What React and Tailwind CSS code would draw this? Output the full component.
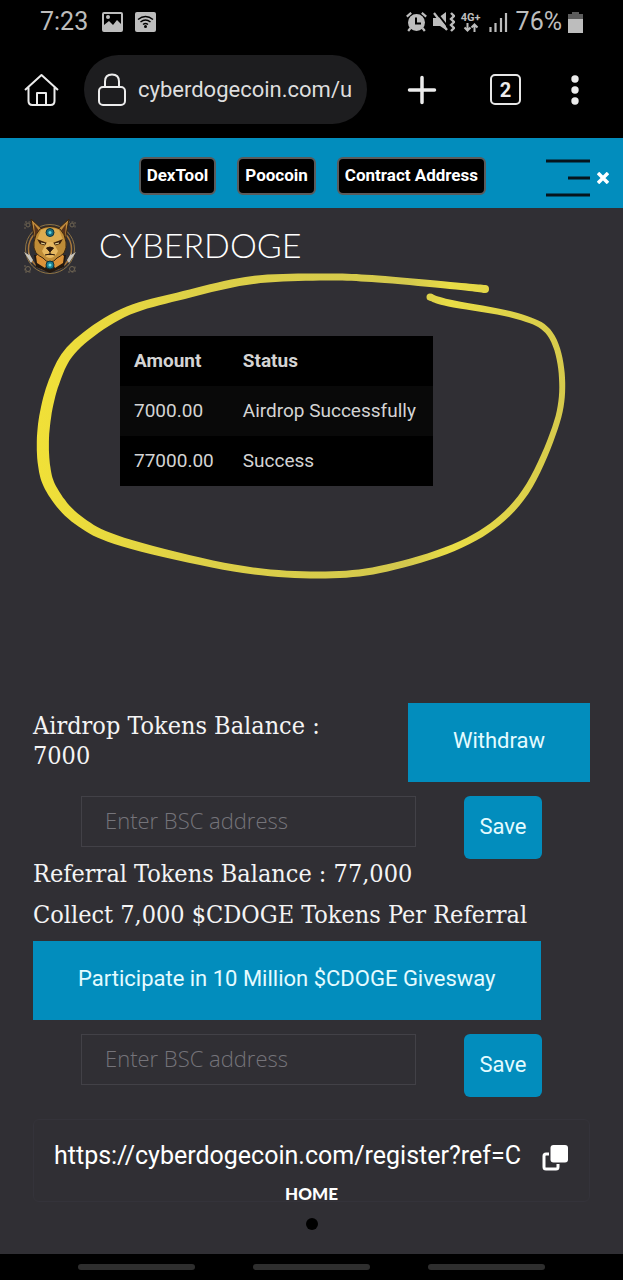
const HEADER_LINKS = ['DexTool', 'Poocoin', 'Contract Address'];

const PAYOUTS = [
  { amount: '7000.00', status: 'Airdrop Successfully' },
  { amount: '77000.00', status: 'Success' },
];

// x, y, pen width
const PEN_POINTS = [
  [485, 289, 8],
  [456, 286, 7],
  [378, 279, 7],
  [326, 277, 7],
  [253, 280, 8],
  [184, 295, 8],
  [123, 313, 9],
  [74, 347, 10],
  [54, 382, 11],
  [44, 425, 12],
  [44, 465, 12],
  [53, 492, 11],
  [78, 520, 10],
  [123, 542, 9],
  [234, 568, 7],
  [318, 575, 7],
  [387, 568, 7],
  [468, 541, 7],
  [521, 498, 7],
  [555, 428, 6],
  [562, 378, 6],
  [550, 334, 6],
  [517, 316, 6],
  [449, 303, 7],
  [430, 297, 7],
];

function spline(a, b, c, d, t) {
  return (
    0.5 *
    (2 * b + (c - a) * t + (2 * a - 5 * b + 4 * c - d) * t * t + (3 * b - a - 3 * c + d) * t * t * t)
  );
}

function penOutline(points) {
  const line = [];
  for (let i = 0; i < points.length - 1; i++) {
    const p0 = points[Math.max(i - 1, 0)];
    const p3 = points[Math.min(i + 2, points.length - 1)];
    for (let s = 0; s < 10; s++) {
      line.push([0, 1, 2].map((k) => spline(p0[k], points[i][k], points[i + 1][k], p3[k], s / 10)));
    }
  }
  line.push(points[points.length - 1]);

  const left = [];
  const right = [];
  line.forEach(([x, y, w], i) => {
    const prev = line[Math.max(i - 1, 0)];
    const next = line[Math.min(i + 1, line.length - 1)];
    const dx = next[0] - prev[0];
    const dy = next[1] - prev[1];
    const len = Math.hypot(dx, dy) || 1;
    const nx = (-dy / len) * (w / 2);
    const ny = (dx / len) * (w / 2);
    left.push(`${(x + nx).toFixed(1)},${(y + ny).toFixed(1)}`);
    right.push(`${(x - nx).toFixed(1)},${(y - ny).toFixed(1)}`);
  });
  return `M${left.join('L')}L${right.reverse().join('L')}Z`;
}

function PenCircle() {
  return (
    <svg
      className="absolute left-0 top-0 pointer-events-none"
      width="623"
      height="400"
      viewBox="0 208 623 400"
      aria-hidden="true"
    >
      <defs>
        <linearGradient id="pen" x1="40" y1="0" x2="565" y2="0" gradientUnits="userSpaceOnUse">
          <stop offset="0" stopColor="#f0e038" />
          <stop offset="0.3" stopColor="#ddd047" />
          <stop offset="0.7" stopColor="#d3c84d" />
          <stop offset="0.78" stopColor="#e9dd46" />
          <stop offset="1" stopColor="#d6ca4c" />
        </linearGradient>
      </defs>
      <g fill="url(#pen)">
        <path d={penOutline(PEN_POINTS)} />
        <circle cx="485" cy="289" r="4" />
        <circle cx="430" cy="297" r="3.500" />
      </g>
    </svg>
  );
}

function StatusBar() {
  return (
    <div className="h-11 flex items-center pl-10 pr-10 text-[#bdbdbd] text-[25px] leading-8">
      <span>7:23</span>
      <svg className="ml-3.5" width="21" height="20" viewBox="0 0 21 20">
        <path fill="currentColor" fillRule="evenodd" d="M2 0h17q2 0 2 2v16q0 2-2 2H2q-2 0-2-2V2q0-2 2-2ZM2 2v11l5-4 4 4 4-5 4 4V2Z" />
        <circle cx="6" cy="5" r="2" fill="currentColor" />
      </svg>
      <svg className="ml-3" width="21" height="20" viewBox="0 0 21 20">
        <rect width="21" height="20" rx="2" fill="currentColor" />
        <g fill="none" stroke="#000" strokeWidth="1.500">
          <path d="M3 7.500q7.500-6 15 0M5.500 10q5-4 10 0M8 12.500q2.500-2 5 0" />
        </g>
        <circle cx="10.500" cy="14.500" r="1.500" fill="#000" />
      </svg>
      <svg className="ml-auto" width="21" height="20" viewBox="0 0 21 20">
        <circle cx="10.500" cy="10.500" r="8.500" fill="currentColor" />
        <path d="M.8 4.600 5.200.8M20.200 4.600 15.800.8M4.500 16 2.200 19M16.500 16l2.300 3" stroke="currentColor" strokeWidth="2.200" />
        <path d="M10 5.500v6h5" fill="none" stroke="#000" strokeWidth="2" />
      </svg>
      <svg className="ml-1.5" width="22" height="20" viewBox="0 0 22 20">
        <path d="M0 6h5L13 0v18l-6-4H0Z" fill="currentColor" />
        <path d="m3 0 12 15" stroke="#000" strokeWidth="2" />
        <path d="m1 1 13 17" stroke="currentColor" strokeWidth="2.200" />
        <path d="m18 1 3 3-3 3 3 3-3 3 3 3-3 3" fill="none" stroke="currentColor" strokeWidth="2.400" />
      </svg>
      <div className="ml-1.5 flex flex-col items-center">
        <span className="text-[11px] leading-[11px] font-bold">4G+</span>
        <svg width="16" height="9" viewBox="0 0 16 9">
          <path d="M4.500 0v8M1.500 4.500l3 3 3-3M11.500 9V1M8.500 4.500l3-3 3 3" fill="none" stroke="currentColor" strokeWidth="2" />
        </svg>
      </div>
      <svg className="ml-2" width="19" height="20" viewBox="0 0 19 20">
        <path d="M1.500 15v5M6.500 11v9M12 6v14M17 1v19" stroke="currentColor" strokeWidth="2.200" />
      </svg>
      <span className="ml-2">76%</span>
      <svg className="ml-1.5" width="15" height="21" viewBox="0 0 15 21">
        <path d="M0 2h4V0h7v2h4v6H0Z" fill="#5c5c5c" />
        <path d="M0 7h15v14H0Z" fill="currentColor" />
      </svg>
    </div>
  );
}

function BrowserBar() {
  return (
    <div className="flex items-center pl-6 pr-10 pt-[11px] pb-3.5 text-[#ececec]">
      <button type="button" aria-label="Home page">
        <svg width="36" height="34" viewBox="0 0 36 34" fill="none" stroke="currentColor" strokeWidth="2" strokeLinejoin="round">
          <path d="M1 17 17.500 2 34 17M4.500 14v14q0 4 4 4h18q4 0 4-4V14M13 32V20h9v12" />
        </svg>
      </button>
      <div className="ml-6 flex-1 min-w-0 h-[69px] rounded-full bg-[#1d1d1f] flex items-center pl-3.5 pr-3">
        <svg className="shrink-0" width="28" height="34" viewBox="0 0 28 34" fill="none" stroke="currentColor" strokeWidth="2">
          <rect x="1" y="14" width="26" height="18" rx="4" />
          <path d="M7 14V8.500q0-7 7-7t7 7V14" />
        </svg>
        <input
          type="text"
          aria-label="Address"
          readOnly
          defaultValue="cyberdogecoin.com/u"
          className="ml-3 flex-1 min-w-0 text-[22px] leading-8 text-[#dedede] outline-none"
        />
      </div>
      <button type="button" aria-label="New tab" className="ml-10">
        <svg width="30" height="30" viewBox="0 0 30 30" stroke="currentColor" strokeWidth="3.500" strokeLinecap="round">
          <path d="M15 2.500v25M2.500 15h25" />
        </svg>
      </button>
      <button
        type="button"
        aria-label="Tabs"
        className="ml-[53px] size-[31px] rounded-[5px] border-2 border-[#e6e6e6] text-xl leading-6 font-bold"
      >
        2
      </button>
      <button type="button" aria-label="More" className="ml-[46px]">
        <svg width="16" height="30" viewBox="0 0 16 30" fill="currentColor">
          <circle cx="8" cy="4" r="3.700" />
          <circle cx="8" cy="15" r="3.700" />
          <circle cx="8" cy="26" r="3.700" />
        </svg>
      </button>
    </div>
  );
}

function SiteHeader() {
  return (
    <header className="h-[70px] bg-[#028dbd] flex items-center justify-end pt-2.5 pr-3.5 text-white">
      <nav className="flex gap-[21px] -mt-1">
        {HEADER_LINKS.map((label) => (
          <a
            key={label}
            href="#"
            className="h-[38px] px-1.5 pb-0.5 flex items-center rounded-[6px] border-2 border-[#5b5b5b] bg-black text-[17px] leading-5 font-bold whitespace-nowrap"
          >
            {label}
          </a>
        ))}
      </nav>
      <button type="button" aria-label="Menu" className="ml-[59px] flex items-center gap-1.5">
        <svg width="46" height="38" viewBox="0 0 46 38" stroke="#06141c" strokeWidth="3">
          <path d="M1 2h44M23 19h22M1 36h44" />
        </svg>
        <svg width="12" height="12" viewBox="0 0 12 12" stroke="#fff" strokeWidth="3.500">
          <path d="m1 1 10 10M11 1 1 11" />
        </svg>
      </button>
    </header>
  );
}

function DogeLogo() {
  return (
    <svg width="54" height="56" viewBox="0 0 54 56">
      <g fill="none" stroke="#6f6552">
        <circle cx="27" cy="30" r="24.500" stroke="#8f7444" />
        <circle cx="27" cy="30" r="21.500" strokeWidth="1.500" stroke="#a8773a" />
        <path d="M2 10V3h7M45 3h7v7M2 46v7h7M45 53h7v-7" strokeDasharray="2 1.500" />
        <circle cx="5" cy="6" r="2" />
        <circle cx="49" cy="6" r="2" />
        <circle cx="5" cy="50" r="2.500" />
        <circle cx="49" cy="50" r="2.500" />
      </g>
      <path d="m1 33 5 3-1-3 5 8-2 3ZM53 33l-5 3 1-3-5 8 2 3Z" fill="#c9c6be" />
      <path d="M11 36h32l-2 12-14 6-14-6Z" fill="#23180f" />
      <path d="m13 37 4-3 8 9-3 6-8-5ZM41 37l-4-3-8 9 3 6 8-5Z" fill="#db9238" />
      <path d="m8 0 12 11-8 11ZM46 0 34 11l8 11Z" fill="#c08a3c" stroke="#3b2610" />
      <path d="m11 5 6 8-5 5ZM43 5l-6 8 5 5Z" fill="#57331a" />
      <path d="M17 10q10-5 20 0 5 5 6 13 1 6-2 11-3 3-7 5-3 4-7 4t-7-4q-4-2-7-5-3-5-2-11 1-8 6-13Z" fill="#bf8c37" stroke="#3b2610" />
      <path d="M18 11q9-4 18 0l4 10-9 2h-8l-9-2Z" fill="#dcac50" />
      <path d="m14 20 10 4v3l-7-2ZM40 20l-10 4v3l7-2Z" fill="#3e220d" />
      <path d="m18 24 4 1M36 24l-4 1" stroke="#f7e7a0" />
      <path d="M24 23h6l5 9q-3 7-8 7t-8-7Z" fill="#e6b860" />
      <path d="M23.500 29q3.500-2 7 0L27 33ZM27 33v2.500M22 36q5-2 10 0" fill="#2b180b" stroke="#2b180b" />
      <circle cx="27" cy="13.500" r="4" fill="#176d80" stroke="#0b3440" />
      <circle cx="27" cy="13.500" r="1.500" fill="#5ed0dc" />
      <circle cx="27" cy="46" r="4" fill="#1c7f92" stroke="#0b3440" />
      <circle cx="27" cy="46" r="1.500" fill="#76dfe8" />
    </svg>
  );
}

function PayoutTable() {
  return (
    <table className="ml-[120px] mt-[61px] bg-black text-[#d4d4d4] text-[19px] leading-6 text-left">
      <thead>
        <tr className="h-[50px]">
          <th className="px-3.5 font-bold">Amount</th>
          <th className="px-3.5 font-bold">Status</th>
        </tr>
      </thead>
      <tbody>
        {PAYOUTS.map((row) => (
          <tr key={row.amount} className="h-[50px] odd:bg-[#090909]">
            <td className="pl-3.5 pr-[15px]">{row.amount}</td>
            <td className="pl-3.5 pr-[17px]">{row.status}</td>
          </tr>
        ))}
      </tbody>
    </table>
  );
}

function AddressForm() {
  return (
    <form className="mt-3.5 px-12 flex items-start gap-12 font-[Roboto,sans-serif]" onSubmit={(e) => e.preventDefault()}>
      <input
        type="text"
        aria-label="BSC address"
        placeholder="Enter BSC address"
        className="flex-1 min-w-0 h-[51px] px-[23px] pb-1 border border-[#424147] font-['Open_Sans',sans-serif] font-light text-[22px] text-white placeholder:text-[#75747a] outline-none"
      />
      <button type="submit" className="h-[63px] w-[78px] pb-0.5 rounded-[6px] bg-[#028dbd] text-[22px] leading-7 text-[#e4fbff]">
        Save
      </button>
    </form>
  );
}

export default function App() {
  return (
    <div className="min-h-screen flex flex-col bg-[#302f34] font-[Roboto,sans-serif]">
      <div className="bg-black">
        <StatusBar />
        <BrowserBar />
      </div>
      <SiteHeader />

      <main className="relative flex-1 text-white">
        <div className="flex items-center gap-[22px] pl-[23px] pt-[11px]">
          <DogeLogo />
          <h1 className="pb-1 font-[Lato,sans-serif] font-light text-[34px] leading-10">CYBERDOGE</h1>
        </div>
        <PayoutTable />
        <PenCircle />

        <section className="mt-[217px] px-[33px] font-['DejaVu_Serif_Condensed','DejaVu_Serif',serif] text-[25px] leading-[30px] text-[#f4f4f4]">
          <div className="flex items-start justify-between">
            <p className="w-[320px] pt-2">Airdrop Tokens Balance : 7000</p>
            <button type="button" className="h-[79px] px-[45px] pb-1 bg-[#028dbd] font-[Roboto,sans-serif] text-[22px] leading-7 text-[#e4fbff]">
              Withdraw
            </button>
          </div>
          <AddressForm />
          <p>Referral Tokens Balance : 77,000</p>
          <p className="mt-[11px]">Collect 7,000 $CDOGE Tokens Per Referral</p>
          <button type="button" className="mt-[11px] h-[79px] px-[45px] pb-1 bg-[#028dbd] font-[Roboto,sans-serif] text-[22px] leading-7 text-[#e4fbff]">
            Participate in 10 Million $CDOGE Givesway
          </button>
          <AddressForm />
        </section>

        <div className="mt-[22px] mx-[33px] h-[83px] px-5 pt-5 flex items-start rounded-md border border-[#34333a]">
          <input
            type="text"
            aria-label="Referral link"
            readOnly
            defaultValue="https://cyberdogecoin.com/register?ref=C"
            className="flex-1 min-w-0 text-[25px] leading-8 outline-none"
          />
          <button type="button" aria-label="Copy link" className="mt-1">
            <svg width="28" height="28" viewBox="0 0 28 28">
              <path d="M8 10H5q-2 0-2 2v11q0 2 2 2h10q2 0 2-2v-3" fill="none" stroke="#fff" strokeWidth="3" />
              <rect x="9.500" y="1" width="17.500" height="17.500" rx="3" fill="#fff" />
            </svg>
          </button>
        </div>

        <footer className="-mt-5 flex flex-col items-center gap-3">
          <a href="#" className="font-[Lato,sans-serif] text-[17px] leading-6 font-black">HOME</a>
          <span className="size-3 rounded-full bg-black" />
        </footer>
      </main>

      <div className="h-[26px] bg-black flex items-center justify-center gap-[58px]">
        <span className="w-[117px] h-1.5 rounded-full bg-[#2e2e2e]" />
        <span className="w-[117px] h-1.5 rounded-full bg-[#2e2e2e]" />
        <span className="w-[117px] h-1.5 rounded-full bg-[#2e2e2e]" />
      </div>
    </div>
  );
}
